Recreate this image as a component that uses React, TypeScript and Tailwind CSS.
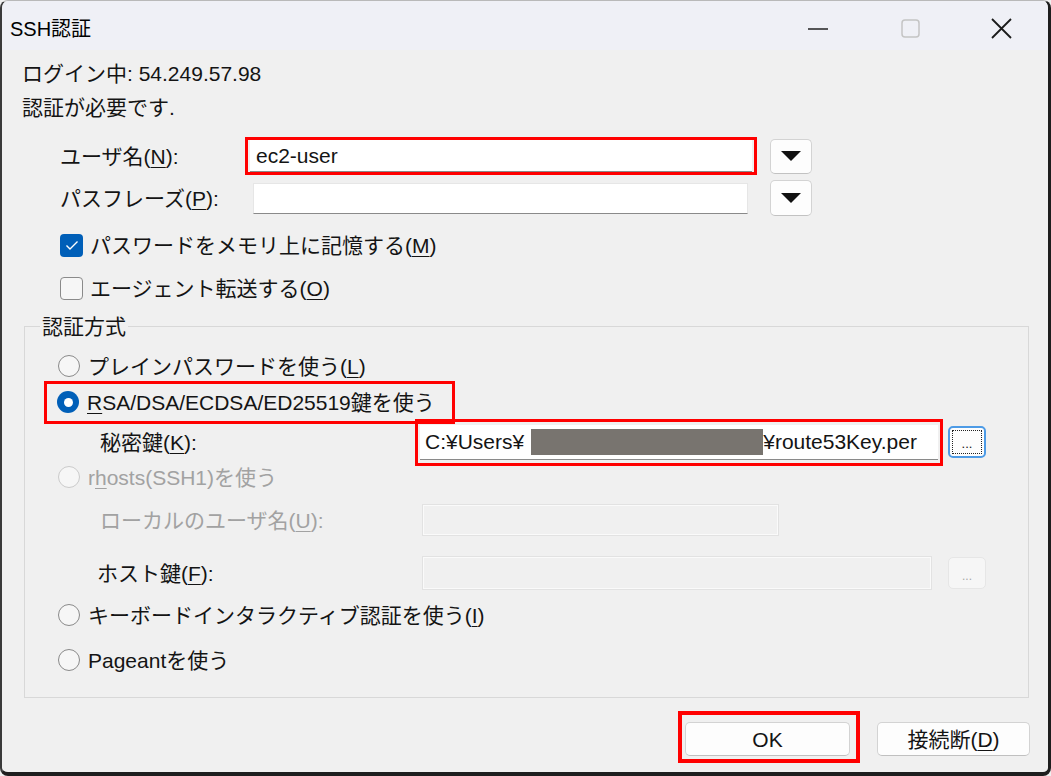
import React from 'react';

const U = ({ children }: { children: React.ReactNode }) => (
  <span className="underline underline-offset-[3px] decoration-1">{children}</span>
);

const Radio = ({ checked = false, disabled = false }: { checked?: boolean; disabled?: boolean }) => {
  if (checked) {
    return (
      <span className="flex w-[22px] h-[22px] shrink-0 items-center justify-center rounded-full bg-[#005fb8]">
        <span className="w-[9px] h-[9px] rounded-full bg-white" />
      </span>
    );
  }
  return (
    <span
      className={`w-[22px] h-[22px] shrink-0 rounded-full border-[1.5px] bg-[#f6f6f6] ${
        disabled ? 'border-[#cbcbcb]' : 'border-[#8a8a8a]'
      }`}
    />
  );
};

const Checkbox = ({ checked = false }: { checked?: boolean }) =>
  checked ? (
    <span className="flex w-[23px] h-[23px] shrink-0 items-center justify-center rounded-[4px] bg-[#005fb8]">
      <svg width="14" height="11" viewBox="0 0 14 11" fill="none">
        <path d="M1.5 5.5 L5 9 L12.5 1.5" stroke="white" strokeWidth="1.4" />
      </svg>
    </span>
  ) : (
    <span className="w-[23px] h-[23px] shrink-0 rounded-[4px] border-[1.5px] border-[#8a8a8a] bg-[#f6f6f6]" />
  );

const DropButton = ({ h }: { h: string }) => (
  <div className={`flex w-[42px] ${h} items-center justify-center rounded-[5px] border border-[#d3d3d3] border-b-[#c2c2c2] bg-[#fdfdfd]`}>
    <svg width="20" height="10" viewBox="0 0 20 10">
      <polygon points="0,0 20,0 10,10" fill="#111" />
    </svg>
  </div>
);

const RadioRow = ({ h, children, disabled = false }: { h: string; children: React.ReactNode; disabled?: boolean }) => (
  <div className={`flex ${h} items-center pl-[33px] gap-[8px]`}>
    <Radio disabled={disabled} />
    <span className={disabled ? 'text-[#a2a2a2]' : ''}>{children}</span>
  </div>
);

export default function App() {
  return (
    <div className="w-[1051px] h-[776px] bg-[#f0f0f0] font-['Liberation_Sans','Noto_Sans_CJK_JP',sans-serif] text-[21px] leading-none text-[#141414]">
      <div className="flex h-full w-full flex-col overflow-hidden rounded-[8px] border-t border-l-2 border-r-[3px] border-b-[4px] border-t-[#b9b9b9] border-l-[#3a3a3a] border-r-[#1e1e1e] border-b-[#1e1e1e]">
        {/* title bar */}
        <div className="flex h-[49px] shrink-0 items-center bg-[#eff0f6] pt-[6px]">
          <span className="pl-[8px] text-[20px] text-black">SSH認証</span>
          <div className="ml-auto flex h-full items-center">
            <div className="flex w-[92px] justify-center">
              <svg width="20" height="4" viewBox="0 0 20 4">
                <line x1="0" y1="2" x2="20" y2="2" stroke="#222" strokeWidth="1.6" />
              </svg>
            </div>
            <div className="flex w-[92px] justify-center">
              <svg width="19" height="19" viewBox="0 0 19 19">
                <rect x="1" y="1" width="17" height="17" rx="3" fill="none" stroke="#c4c4c4" strokeWidth="1.5" />
              </svg>
            </div>
            <div className="flex w-[92px] justify-center pr-[2px]">
              <svg width="21" height="21" viewBox="0 0 21 21">
                <path d="M1 1 L20 20 M20 1 L1 20" stroke="#1a1a1a" strokeWidth="1.8" />
              </svg>
            </div>
          </div>
        </div>

        {/* body */}
        <div className="flex flex-1 flex-col pt-[6px]">
          <div className="flex h-[34px] items-center pl-[20px]">ログイン中: 54.249.57.98</div>
          <div className="flex h-[34px] items-center pl-[20px]">認証が必要です.</div>

          <div className="mt-[13px] flex h-[38px] items-center pl-[58px]">
            <span className="w-[185px]">
              ユーザ名(<U>N</U>):
            </span>
            <div className="flex h-[38px] w-[512px] items-center border-[3px] border-[#ff0000] px-[2px]">
              <div className="flex h-[32px] w-full items-center border-b border-b-[#8a8a8a] bg-white pl-[6px]">ec2-user</div>
            </div>
            <div className="ml-[13px]">
              <DropButton h="h-[35px]" />
            </div>
          </div>

          <div className="mt-[4px] flex h-[38px] items-center pl-[58px]">
            <span className="w-[193px]">
              パスフレーズ(<U>P</U>):
            </span>
            <div className="h-[31px] w-[495px] border border-[#e6e6e6] border-b-[#8a8a8a] bg-white" />
            <div className="ml-[22px]">
              <DropButton h="h-[36px]" />
            </div>
          </div>

          <div className="mt-[11px] flex h-[34px] items-center gap-[7px] pl-[58px]">
            <Checkbox checked />
            <span>
              パスワードをメモリ上に記憶する(<U>M</U>)
            </span>
          </div>
          <div className="mt-[9px] flex h-[34px] items-center gap-[7px] pl-[58px]">
            <Checkbox />
            <span>
              エージェント転送する(<U>O</U>)
            </span>
          </div>

          {/* group box */}
          <div className="relative ml-[22px] mt-[21px] w-[1005px] border border-[#d8d8d8] pt-[22px] pb-[10px]">
            <span className="absolute left-[15px] top-[-13px] bg-[#f0f0f0] px-[2px] leading-[26px]">認証方式</span>

            <RadioRow h="h-[34px]">
              プレインパスワードを使う(<U>L</U>)
            </RadioRow>

            <div className="flex h-[38px] items-center pl-[19px]">
              <div className="flex h-[43px] w-[411px] shrink-0 items-center gap-[8px] whitespace-nowrap border-[3px] border-[#ff0000] pl-[10px]">
                <Radio checked />
                <span>
                  <U>R</U>SA/DSA/ECDSA/ED25519鍵を使う
                </span>
              </div>
            </div>

            <div className="flex h-[42px] items-center pl-[75px]">
              <span className="w-[315px]">
                秘密鍵(<U>K</U>):
              </span>
              <div className="flex h-[47px] w-[528px] items-center border-[3px] border-[#ff0000] px-[2px]">
                <div className="flex h-[35px] w-full items-center overflow-hidden whitespace-nowrap border-b border-b-[#8a8a8a] bg-white pl-[5px]">
                  <span>C:¥Users¥</span>
                  <span className="ml-[7px] inline-block h-[26px] w-[232px] bg-[#78746f]" />
                  <span>¥route53Key.per</span>
                </div>
              </div>
              <div className="ml-[5px] flex h-[32px] w-[38px] items-center justify-center rounded-[5px] border-2 border-[#4d9be6] bg-[#fdfdfd] p-[2px]">
                <div className="flex h-full w-full items-end justify-center border border-dotted border-[#222] pb-[3px] text-[13px]">
                  ...
                </div>
              </div>
            </div>

            <RadioRow h="h-[28px]" disabled>
              r<U>h</U>osts(SSH1)を使う
            </RadioRow>

            <div className="flex h-[58px] items-center pl-[75px]">
              <span className="w-[322px] text-[#a2a2a2]">
                ローカルのユーザ名(<U>U</U>):
              </span>
              <div className="h-[32px] w-[357px] border border-[#e2e2e2] shadow-[inset_0_0_0_1px_#fafafa]" />
            </div>

            <div className="flex h-[48px] items-center pl-[72px]">
              <span className="w-[325px]">
                ホスト鍵(<U>F</U>):
              </span>
              <div className="h-[34px] w-[510px] border border-[#e2e2e2] shadow-[inset_0_0_0_1px_#fafafa]" />
              <div className="ml-[16px] flex h-[32px] w-[38px] items-end justify-center rounded-[5px] border border-[#e6e6e6] bg-[#f6f6f6] pb-[6px] text-[12px] text-[#a8a8a8]">
                ...
              </div>
            </div>

            <RadioRow h="h-[36px]">
              キーボードインタラクティブ認証を使う(<U>I</U>)
            </RadioRow>
            <RadioRow h="h-[54px]">Pageantを使う</RadioRow>
          </div>

          {/* buttons */}
          <div className="mt-[24px] flex items-center justify-end gap-[27px] pr-[18px]">
            <div className="relative">
              <span className="pointer-events-none absolute -left-[7px] -right-[10px] -top-[11px] -bottom-[7px] border-[4px] border-[#ff0000]" />
              <div className="flex h-[34px] w-[165px] items-center justify-center rounded-[5px] border border-[#d3d3d3] border-b-[#c0c0c0] bg-[#fdfdfd]">
                OK
              </div>
            </div>
            <div className="flex h-[34px] w-[153px] items-center justify-center rounded-[5px] border border-[#d3d3d3] border-b-[#c0c0c0] bg-[#fdfdfd]">
              接続断(<U>D</U>)
            </div>
          </div>
        </div>
      </div>
    </div>
  );
}
